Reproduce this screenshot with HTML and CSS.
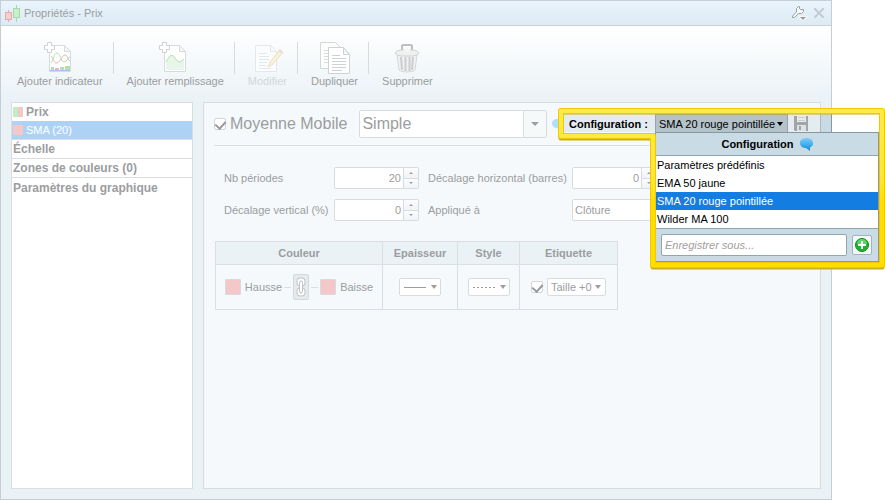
FILE: index.html
```html
<!DOCTYPE html>
<html lang="fr">
<head>
    <title>Propriétés - Prix</title>
    <meta charset="UTF-8" />
    <meta name="viewport" content="width=device-width, initial-scale=1.0" />
    <link rel="stylesheet" href="styles.css">
</head>
<body>
    <div class="window">
        <div class="titlebar">
            <svg class="logo" width="16" height="18" viewBox="0 0 16 18">
                <path d="M11.500 1v17" stroke="#a9d8ad"/>
                <path d="M3.500 6v12" stroke="#e3abb0"/>
                <rect x=".5" y="8.500" width="6" height="7" fill="#f9cccd" stroke="#e3abb0"/>
                <rect x="8.500" y="4.500" width="6" height="9" fill="#c6f1c5" stroke="#a9d8ad"/>
            </svg>
            <span class="title">Propriétés - Prix</span>
            <button class="icon-btn" title="Options">
                <svg width="16" height="16" viewBox="0 0 16 16">
                    <path d="M7.500 1.500L5.500 3.500V7L1.500 11V12.500H3.500L7.500 8.500H10.500L12.500 6.500V4.500H9.500L8.500 3.500V1.500Z" fill="#f4f9fc" stroke="#9b9ea0"/>
                    <path d="M8 11.500h8v1l-3 3h-2l-3-3z" fill="#fff"/>
                    <path d="M9 12h6l-3 3z" fill="#97999b"/>
                </svg>
            </button>
            <button class="icon-btn" title="Fermer">
                <svg width="10" height="10" viewBox="0 0 10 10">
                    <path d="M0 0l10 10M10 0L0 10" stroke="#c2ccd2" stroke-width="2"/>
                </svg>
            </button>
        </div>

        <div class="toolbar">
            <button class="tool">
                <svg width="32" height="32" viewBox="0 0 32 32">
                    <path d="M5.500 3.500h15l6 6v20h-21z" fill="#fff" stroke="#d7dadd"/>
                    <path d="M20.500 3.500v6h6z" fill="#f4f5f6" stroke="#d7dadd"/>
                    <path d="M7 14c2 1 3 8 6 7s5-8 8-8 2 4 5 6" fill="none" stroke="#edb5b9"/>
                    <path d="M7 21c2-2 3-10 6-10s4 9 7 9 3-4 6-5" fill="none" stroke="#aee3ae"/>
                    <path d="M7 25h3v3h-3zM16 25h4v3h-4zM21 24h5v4h-5z" fill="#aee3ae"/>
                    <path d="M11 26h4v2h-4z" fill="#edb5b9"/>
                    <path d="M6 28.500h20" stroke="#b2bce9"/>
                    <path d="M3.500 .5h4v3h3v4h-3v3h-4v-3h-3v-4h3z" fill="#fff" stroke="#ccd3d7"/>
                </svg>
                Ajouter indicateur
            </button>
            <button class="tool">
                <svg width="32" height="32" viewBox="0 0 32 32">
                    <path d="M5.500 3.500h15l6 6v20h-21z" fill="#fff" stroke="#d7dadd"/>
                    <path d="M20.500 3.500v6h6z" fill="#f4f5f6" stroke="#d7dadd"/>
                    <path d="M7 20l3-5q3-4 6 1t5 4l4-3v11h-18z" fill="#e8f6e9"/>
                    <path d="M7 20l3-5q3-4 6 1t5 4l4-3" fill="none" stroke="#b5e2b5"/>
                    <path d="M3.500 .5h4v3h3v4h-3v3h-4v-3h-3v-4h3z" fill="#fff" stroke="#ccd3d7"/>
                </svg>
                Ajouter remplissage
            </button>
            <button class="tool" disabled>
                <svg width="32" height="32" viewBox="0 0 32 32">
                    <path d="M4.500 3.500h15l6 6v20h-21z" fill="#fbfcfd" stroke="#e5e8ea"/>
                    <path d="M19.500 3.500v6h6" fill="none" stroke="#e5e8ea"/>
                    <path d="M8 11.500h8M8 14.500h10M8 17.500h10M8 20.500h8M8 23.500h7M8 26.500h12" stroke="#e5e8ea"/>
                    <path d="M17 25l2-5L29 7.500l3 2.500L21 23z" fill="#faf2d6" stroke="#e6e1d2"/>
                    <path d="M28 8l3 3" stroke="#eddcda" stroke-width="2"/>
                </svg>
                Modifier
            </button>
            <button class="tool">
                <svg width="32" height="32" viewBox="0 0 32 32">
                    <path d="M1.500 .5h15l6 6v20h-21z" fill="#fcfdfd" stroke="#d5d7d9"/>
                    <path d="M5 8.500h12M5 11.500h12M5 14.500h12M5 17.500h12M5 20.500h12" stroke="#d9dbdd"/>
                    <path d="M9.500 5.500h15l6 7v19h-21z" fill="#fff" stroke="#cfd1d3"/>
                    <path d="M24.500 5.500v7h6z" fill="#f6f7f8" stroke="#cfd1d3"/>
                    <path d="M13 13.500h8M13 16.500h14M13 19.500h14M13 22.500h14M13 25.500h14M13 28.500h10" stroke="#ced0d2"/>
                </svg>
                Dupliquer
            </button>
            <button class="tool">
                <svg width="32" height="32" viewBox="0 0 32 32">
                    <path d="M11 9V4q0-1 2-1h6q2 0 2 1v5" fill="none" stroke="#bdbfc0" stroke-width="2"/>
                    <path d="M6 13h20l-2 15q-1 2-8 2t-8-2z" fill="#f0f1f2" stroke="#d5d7d8"/>
                    <path d="M10 15l1 13M14.500 15v14M18.500 15v14M22 15l-1 13" stroke="#cbcdce" stroke-width="2"/>
                    <path d="M4 11q0-2 6-3h12q6 1 6 3 0 2-6 3h-12q-6-1-6-3z" fill="#eef0f0" stroke="#d0d2d3"/>
                    <path d="M13 6h6v4h-6z" fill="#f5f6f6"/>
                </svg>
                Supprimer
            </button>
        </div>

        <div class="content">
            <ul class="tree">
                <li class="tree-item tree-root"><span class="swatch swatch-duo"></span>Prix</li>
                <li class="tree-item selected"><span class="swatch"></span>SMA (20)</li>
                <li class="tree-item">Échelle</li>
                <li class="tree-item">Zones de couleurs (0)</li>
                <li class="tree-item">Paramètres du graphique</li>
            </ul>

            <div class="panel">
                <div class="heading">
                    <input class="check" type="checkbox" id="enabled" checked>
                    <label for="enabled">Moyenne Mobile</label>
                    <div class="select select-big">
                        <select aria-label="Type de moyenne"><option>Simple</option></select>
                        <span class="arrow"></span>
                    </div>
                    <svg class="bubble" width="13" height="13" viewBox="0 0 13 13">
                        <path d="M6.500 1C10 1 12 3 12 5.500S10 10 9 10v3l-3-3C3 10 1 8 1 5.500S3 1 6.500 1z" fill="#b3def7"/>
                    </svg>
                </div>

                <div class="fields">
                    <label for="periods">Nb périodes</label>
                    <div class="spin">
                        <input type="number" id="periods" value="20">
                        <div class="spin-btns">
                            <button title="Plus"><span class="tri tri-up"></span></button>
                            <button title="Moins"><span class="tri"></span></button>
                        </div>
                    </div>
                    <label for="offsetX">Décalage horizontal (barres)</label>
                    <div class="spin">
                        <input type="number" id="offsetX" value="0">
                        <div class="spin-btns">
                            <button title="Plus"><span class="tri tri-up"></span></button>
                            <button title="Moins"><span class="tri"></span></button>
                        </div>
                    </div>
                    <label for="offsetY">Décalage vertical (%)</label>
                    <div class="spin">
                        <input type="number" id="offsetY" value="0">
                        <div class="spin-btns">
                            <button title="Plus"><span class="tri tri-up"></span></button>
                            <button title="Moins"><span class="tri"></span></button>
                        </div>
                    </div>
                    <label for="source">Appliqué à</label>
                    <div class="select select-source">
                        <select id="source"><option>Clôture</option></select>
                        <span class="arrow"></span>
                    </div>
                </div>

                <table class="styles">
                    <thead>
                        <tr>
                            <th class="col-color">Couleur</th>
                            <th class="col-width">Epaisseur</th>
                            <th class="col-style">Style</th>
                            <th class="col-label">Etiquette</th>
                        </tr>
                    </thead>
                    <tbody>
                        <tr>
                            <td>
                                <div class="colors">
                                    <button class="color" id="upColor" aria-labelledby="upLabel"></button>
                                    <span id="upLabel">Hausse</span>
                                    <span class="dash"></span>
                                    <button class="link-btn" title="Lier les couleurs">
                                        <svg width="10" height="20" viewBox="0 0 10 20">
                                            <g fill="none" stroke="#bfc4c7" stroke-width="4">
                                                <rect x="2.500" y="2.500" width="5" height="5" rx="2"/>
                                                <rect x="2.500" y="12.500" width="5" height="5" rx="2"/>
                                            </g>
                                            <g fill="none" stroke="#fff" stroke-width="2">
                                                <rect x="2.500" y="2.500" width="5" height="5" rx="2"/>
                                                <rect x="2.500" y="12.500" width="5" height="5" rx="2"/>
                                            </g>
                                            <path d="M5 5v10" stroke="#bfc4c7" stroke-width="4"/>
                                            <path d="M5 5v10" stroke="#fff" stroke-width="2"/>
                                        </svg>
                                    </button>
                                    <span class="dash"></span>
                                    <button class="color" id="downColor" aria-labelledby="downLabel"></button>
                                    <span id="downLabel">Baisse</span>
                                </div>
                            </td>
                            <td>
                                <button class="line-btn" title="Epaisseur">
                                    <svg width="22" height="1" viewBox="0 0 22 1"><path d="M0 .5h22" stroke="#9b9d9f"/></svg>
                                    <span class="arrow"></span>
                                </button>
                            </td>
                            <td>
                                <button class="line-btn" title="Style">
                                    <svg width="22" height="1" viewBox="0 0 22 1"><path d="M0 .5h22" stroke="#9b9d9f" stroke-dasharray="2 2"/></svg>
                                    <span class="arrow"></span>
                                </button>
                            </td>
                            <td>
                                <div class="tag">
                                    <input class="check" type="checkbox" aria-label="Afficher l'étiquette" checked>
                                    <div class="select select-tag">
                                        <select aria-label="Taille de l'étiquette"><option>Taille +0</option></select>
                                        <span class="arrow"></span>
                                    </div>
                                </div>
                            </td>
                        </tr>
                    </tbody>
                </table>
            </div>
        </div>
    </div>

    <div class="callout">
        <div class="config-bar">
            <span class="config-label">Configuration :</span>
            <button class="config-btn" id="configBtn">SMA 20 rouge pointillée <span class="arrow"></span></button>
            <button class="save-btn" title="Enregistrer">
                <svg width="14" height="15" viewBox="0 0 14 15">
                    <path d="M0 0h14v15H1l-1-1z" fill="#a0a5a8"/>
                    <path d="M3 0h9v6H3z" fill="#e6ebee"/>
                    <path d="M4 1.500h7M4 4.500h7" stroke="#c8cdd0"/>
                    <path d="M3 9h9v6H3z" fill="#dde2e5"/>
                    <path d="M5 10h2v4H5z" fill="#a0a5a8"/>
                </svg>
            </button>
            <span class="panel-edge"></span>
            <span class="outside"></span>
        </div>
        <div class="menu">
            <div class="menu-title">
                Configuration
                <svg width="13" height="13" viewBox="0 0 13 13">
                    <defs>
                        <linearGradient id="blue" x2="0" y2="1">
                            <stop offset="0" stop-color="#7cd0fb"/>
                            <stop offset="1" stop-color="#0a8be0"/>
                        </linearGradient>
                    </defs>
                    <path d="M6.500 0C10.500 0 13 2 13 5c0 2-1 3.500-3 4.500V13L6 10C2.500 10 0 8 0 5s2.500-5 6.500-5z" fill="url(#blue)"/>
                </svg>
            </div>
            <ul class="menu-list">
                <li><button>Paramètres prédéfinis</button></li>
                <li><button>EMA 50 jaune</button></li>
                <li><button class="active">SMA 20 rouge pointillée</button></li>
                <li><button>Wilder MA 100</button></li>
            </ul>
            <div class="menu-save">
                <input type="text" placeholder="Enregistrer sous..." aria-label="Enregistrer sous">
                <button title="Ajouter">
                    <svg width="14" height="14" viewBox="0 0 14 14">
                        <circle cx="7" cy="7" r="6.500" fill="#1eb32b" stroke="#128a1c"/>
                        <path d="M2 6a5 5 0 0 1 10 0z" fill="#5ed264"/>
                        <path d="M7 3v8M3 7h8" stroke="#fff" stroke-width="2"/>
                    </svg>
                </button>
            </div>
        </div>
        <svg class="outline" width="327" height="162" viewBox="0 0 327 162">
            <defs>
                <linearGradient id="yellow" gradientUnits="userSpaceOnUse" x1="0" y1="0" x2="0" y2="160">
                    <stop offset="0" stop-color="#ffea4a"/>
                    <stop offset=".45" stop-color="#ffe634"/>
                    <stop offset=".6" stop-color="#ffdd00"/>
                    <stop offset="1" stop-color="#ffdf00"/>
                </linearGradient>
            </defs>
            <path d="M3 3H324V158H95V29H3Z" fill="none" stroke="#c9ad2a" stroke-width="5" stroke-linejoin="round" transform="translate(0 1)"/>
            <path d="M3 3H324V157H95V28H3Z" fill="none" stroke="#f2c900" stroke-width="6" stroke-linejoin="round"/>
            <path d="M3 3H324V157H95V28H3Z" fill="none" stroke="url(#yellow)" stroke-width="4" stroke-linejoin="round"/>
        </svg>
    </div>
</body>
</html>
```
FILE: styles.css
```css
* {
    box-sizing: border-box;
}

body {
    margin: 0;
    position: relative;
    background: #fff;
    color: #9b9d9f;
    font-family: "Liberation Sans", Arial, sans-serif;
    font-size: 11px;
    line-height: 16px;
}

button, input, select {
    font: inherit;
    color: inherit;
    margin: 0;
    padding: 0;
    border: none;
    background: none;
}

svg {
    display: block;
    flex: none;
}

ul {
    list-style: none;
    margin: 0;
    padding: 0;
}

.window {
    display: flex;
    flex-direction: column;
    min-height: 100vh;
    margin-right: 53px;
    border: 1px solid #c5ced4;
    background: #eaf2f6;
}

/* Title bar */
.titlebar {
    display: flex;
    align-items: center;
    gap: 3px;
    height: 25px;
    padding: 0 5px 0 4px;
    border-bottom: 1px solid #c8d4dc;
    background: linear-gradient(#e9f4fc, #deebf4);
}

.title {
    flex: 1;
}

.icon-btn {
    padding: 0 2px;
}

/* Toolbar */
.toolbar {
    display: flex;
    align-items: flex-start;
    height: 76px;
    padding: 16px 3px 0;
    background: linear-gradient(#fff, #eaf2f6);
}

.tool {
    display: flex;
    flex-direction: column;
    align-items: center;
    height: 32px;
    padding: 0 10px 0 13px;
    line-height: 14px;
    white-space: nowrap;
}

.tool + .tool {
    border-left: 1px solid #d5dbde;
}

.tool:disabled {
    color: #d2d6d9;
}

/* Content */
.content {
    flex: 1;
    display: flex;
    gap: 10px;
    padding: 0 10px 10px;
}

.tree {
    width: 182px;
    border: 1px solid #d6dfe4;
    background: #fff;
    font-size: 12px;
    font-weight: bold;
}

.tree-item {
    display: flex;
    align-items: center;
    gap: 3px;
    height: 19px;
    padding: 0 1px;
    border-bottom: 1px solid #d9dde0;
}

.tree-root {
    height: 18px;
    border-bottom: none;
}

.tree-item:last-child {
    border-bottom: none;
}

.tree-item.selected {
    background: #aed2f5;
    color: #fff;
    font-size: 11px;
    font-weight: normal;
}

.swatch {
    width: 10px;
    height: 10px;
    background: #f4c8c9;
}

.swatch-duo {
    background: linear-gradient(90deg, #c3ecc3 50%, #f4c8c9 50%);
}

.panel {
    flex: 1;
    border: 1px solid #d6dde1;
    background: #f5f9fb;
    padding: 7px 10px;
}

.heading {
    display: flex;
    align-items: center;
    height: 36px;
    padding-bottom: 7px;
    border-bottom: 1px solid #d9dee1;
    font-size: 16px;
}

.heading label {
    margin: 0 12px 0 4px;
}

.bubble {
    margin-left: 4px;
}

.check {
    appearance: none;
    width: 12px;
    height: 12px;
    border: 1px solid #d2d6d9;
    border-radius: 2px;
    background: #fff;
    display: grid;
    place-items: center;
}

.check:checked::before {
    content: "";
    width: 5px;
    height: 8px;
    margin-bottom: 3px;
    border: solid #97999b;
    border-width: 0 2px 2px 0;
    transform: rotate(42deg);
}

.arrow {
    width: 0;
    height: 0;
    border: 4px solid transparent;
    border-top-color: #9b9d9f;
    border-bottom: none;
}

/* The arrow shares the cell of its select */
.select {
    display: grid;
    grid-template-columns: 1fr auto;
    align-items: center;
    height: 22px;
    border: 1px solid #d6dcdf;
    border-radius: 2px;
    background: #fff;
}

.select select {
    grid-area: 1 / 1 / 2 / 3;
    appearance: none;
    width: 100%;
    height: 100%;
    padding-left: 2px;
    outline: none;
}

.select .arrow {
    grid-area: 1 / 2;
    margin-right: 4px;
    pointer-events: none;
}

.select-big {
    width: 188px;
    height: 28px;
    background: linear-gradient(90deg, #fff 163px, #d9dee1 163px, #d9dee1 164px, #f6f9fa 164px);
}

.select-big .arrow {
    margin-right: 7px;
}

.select-source {
    width: 120px;
}

/* Fields */
.fields {
    display: grid;
    grid-template-columns: 110px 85px 153px auto;
    justify-content: start;
    align-items: center;
    row-gap: 10px;
    padding: 21px 10px 20px;
    white-space: nowrap;
}

.fields label:nth-of-type(even) {
    padding-left: 9px;
}

.spin {
    display: flex;
    width: 85px;
    height: 22px;
    border: 1px solid #d6dcdf;
    border-radius: 2px;
    background: #fff;
}

.spin input {
    flex: 1;
    min-width: 0;
    padding-right: 2px;
    text-align: right;
    appearance: textfield;
}

.spin input::-webkit-inner-spin-button {
    appearance: none;
}

.spin-btns {
    display: flex;
    flex-direction: column;
    width: 15px;
    border-left: 1px solid #d6dcdf;
}

.spin-btns button {
    flex: 1;
    display: flex;
    align-items: center;
    justify-content: center;
    background: linear-gradient(#fbfcfd, #f0f4f6);
}

.spin-btns button + button {
    border-top: 1px solid #d6dcdf;
}

.tri {
    border: 2px solid transparent;
    border-top-color: #9b9d9f;
    border-bottom: none;
}

.tri-up {
    transform: rotate(180deg);
}

/* Style table */
.styles {
    border-collapse: collapse;
    margin-left: 1px;
}

.styles th, .styles td {
    border: 1px solid #d9dfe3;
    padding: 0;
}

.styles th {
    height: 23px;
    background: #eaf2f6;
}

.styles td {
    height: 45px;
}

.col-color {
    width: 167px;
}

.col-width {
    width: 75px;
}

.col-style {
    width: 62px;
}

.col-label {
    width: 98px;
}

.colors, .tag {
    display: flex;
    align-items: center;
    justify-content: center;
    gap: 4px;
}

.color {
    width: 16px;
    height: 16px;
    border: 1px solid #d7dbde;
    border-radius: 1px;
    background: #f4c8c9;
}

.dash {
    width: 7px;
    height: 1px;
    margin: 0 -2px;
    background: #d9dee1;
}

.link-btn {
    padding: 2px;
    border: 1px solid #d3d9dc;
    border-radius: 2px;
    background: #e5eaed;
}

.line-btn {
    display: flex;
    align-items: center;
    gap: 5px;
    width: 42px;
    height: 18px;
    margin: 0 auto;
    padding-left: 4px;
    border: 1px solid #d6dcdf;
    border-radius: 2px;
    background: #fff;
}

.select-tag {
    width: 59px;
    height: 18px;
}

.select-tag select {
    padding-left: 3px;
}

.line-btn .arrow, .select-tag .arrow {
    border-width: 4px 3px 0;
}

/* Highlighted configuration menu, drawn over the window */
.callout {
    position: absolute;
    top: 108px;
    right: 0;
    width: 327px;
    padding: 6px 6px 6px 5px;
    color: #000;
}

.outline {
    position: absolute;
    top: 0;
    left: 0;
    pointer-events: none;
}

.config-bar {
    display: flex;
    height: 18px;
    background: #e4ecf2;
}

.config-label {
    width: 92px;
    padding: 2px 0 0 6px;
    font-weight: bold;
    white-space: nowrap;
}

.config-btn {
    display: flex;
    align-items: center;
    justify-content: space-between;
    width: 133px;
    padding: 0 4px 0 3px;
    border: 1px solid #95a5ad;
    border-width: 1px 1px 0;
    background: #b4c2c9;
    white-space: nowrap;
}

.config-btn .arrow {
    border-width: 4px 3px 0;
    border-top-color: #000;
}

.save-btn {
    flex: 1;
    padding: 0 0 0 6px;
}

.panel-edge {
    width: 12px;
    border: solid #8798a2;
    border-width: 0 1px;
    border-left-color: #a9b9c2;
    background: #c8dae4;
}

.outside {
    width: 47px;
    background: #fff;
}

.menu {
    margin-left: 92px;
    border: 1px solid #8798a2;
    background: #c9dbe5;
}

.menu-title {
    display: flex;
    align-items: center;
    justify-content: center;
    gap: 6px;
    height: 22px;
    font-weight: bold;
}

.menu-list {
    border: solid #93a5ae;
    border-width: 1px 0;
    background: #fff;
}

.menu-list button {
    display: block;
    width: 100%;
    height: 18px;
    padding-left: 1px;
    text-align: left;
}

.menu-list .active {
    background: #147de2;
    color: #fff;
}

.menu-save {
    display: flex;
    align-items: center;
    gap: 5px;
    height: 32px;
    padding: 0 6px 0 5px;
}

.menu-save input {
    flex: 1;
    min-width: 0;
    height: 22px;
    padding: 0 3px;
    border: 1px solid #93a5ae;
    border-radius: 2px;
    background: #fff;
}

.menu-save input::placeholder {
    color: #a0a0a0;
    font-style: italic;
}

.menu-save button {
    display: grid;
    place-items: center;
    width: 20px;
    height: 20px;
    border: 1px solid #a3b3bc;
    border-radius: 2px;
    background: #f5f8fa;
}
```
